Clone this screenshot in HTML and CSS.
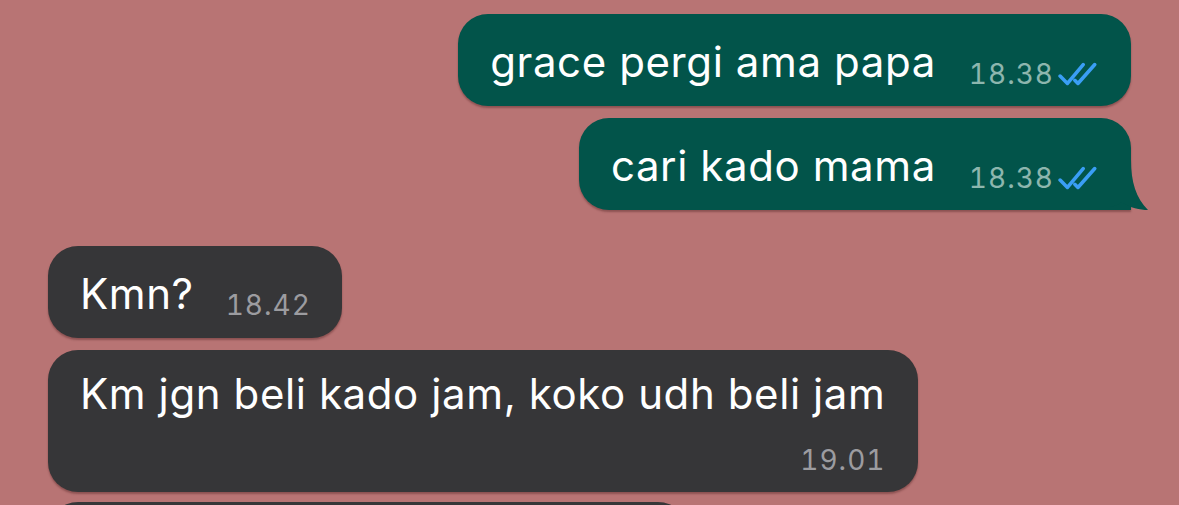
FILE: index.html
```html
<!DOCTYPE html>
<html>
<head>
<meta charset="utf-8">
<link rel="stylesheet" href="styles.css">
</head>
<body>
<div class="chat">
  <div class="row out">
    <div class="bubble green">
      <span class="text">grace pergi ama papa</span>
      <span class="meta"><span class="time">18.38</span><svg class="ticks" viewBox="0 0 40 24" width="42" height="26"><path d="M2 14 L9 21 L24 3" /><path d="M16 18 L19 21 L35 3" /></svg></span>
    </div>
  </div>
  <div class="row out">
    <div class="bubble green tail">
      <span class="text">cari kado mama</span>
      <span class="meta"><span class="time">18.38</span><svg class="ticks" viewBox="0 0 40 24" width="42" height="26"><path d="M2 14 L9 21 L24 3" /><path d="M16 18 L19 21 L35 3" /></svg></span>
      <svg class="tailshape" viewBox="0 0 40 50" width="40" height="50"><path d="M0 0 L23 0 C23 22 28 38 40 50 C32 50 22 48 14 42 C8 46 4 47 0 47 Z" /></svg>
    </div>
  </div>
  <div class="row in first">
    <div class="bubble gray">
      <span class="text">Kmn?</span>
      <span class="meta"><span class="time">18.42</span></span>
    </div>
  </div>
  <div class="row in">
    <div class="bubble gray stacked">
      <span class="text">Km jgn beli kado jam, koko udh beli jam</span>
      <span class="meta"><span class="time">19.01</span></span>
    </div>
  </div>
  <div class="row in">
    <div class="bubble gray partial"></div>
  </div>
</div>
</body>
</html>
```

FILE: styles.css
```css
html, body {
  margin: 0;
  padding: 0;
  background: #b87474;
  overflow: hidden;
  height: 505px;
}
.chat {
  display: flex;
  flex-direction: column;
  gap: 12px;
  height: 505px;
  overflow: hidden;
  box-sizing: border-box;
  padding: 14px 48px 0 48px;
  font-family: Inter, "Noto Sans", "Liberation Sans", sans-serif;
}
.row {
  display: flex;
  flex-shrink: 0;
}
.row.out {
  justify-content: flex-end;
}
.row.in {
  justify-content: flex-start;
}
.row.first {
  margin-top: 24px;
}
.bubble {
  position: relative;
  display: flex;
  align-items: flex-end;
  border-radius: 30px;
  padding: 0 31px 0 32px;
  height: 92px;
  box-sizing: border-box;
  box-shadow: 0 2px 2px rgba(60, 20, 20, 0.35);
}
.green {
  background: #02544a;
}
.gray {
  background: #363638;
}
.text {
  color: #ffffff;
  font-size: 42px;
  line-height: 48px;
  letter-spacing: 0.6px;
  padding-bottom: 20px;
  white-space: nowrap;
}
.meta {
  display: flex;
  align-items: center;
  margin-left: 33px;
  padding-bottom: 17px;
}
.time {
  font-size: 28px;
  line-height: 30px;
  letter-spacing: 1px;
  font-variant-numeric: tabular-nums;
}
.green .time {
  color: #8db6ae;
}
.gray .time {
  color: #9c9ca0;
}
.ticks {
  margin-left: 4px;
  fill: none;
  stroke: #3a9ef5;
  stroke-width: 3.4;
  stroke-linecap: round;
  stroke-linejoin: round;
}
.tail {
  border-bottom-right-radius: 0;
}
.tailshape {
  position: absolute;
  right: -17px;
  bottom: 0;
  fill: #02544a;
}
.gray .meta {
  margin-left: 32px;
  padding-bottom: 18px;
}
.stacked {
  flex-direction: column;
  align-items: stretch;
  height: 142px;
  padding: 20px 33px 0 32px;
}
.stacked .text {
  padding-bottom: 0;
}
.stacked .meta {
  align-self: flex-end;
  margin-left: 0;
  padding-bottom: 0;
  margin-top: 27px;
}
.partial {
  width: 640px;
  height: 60px;
  margin-top: -2px;
}
```
